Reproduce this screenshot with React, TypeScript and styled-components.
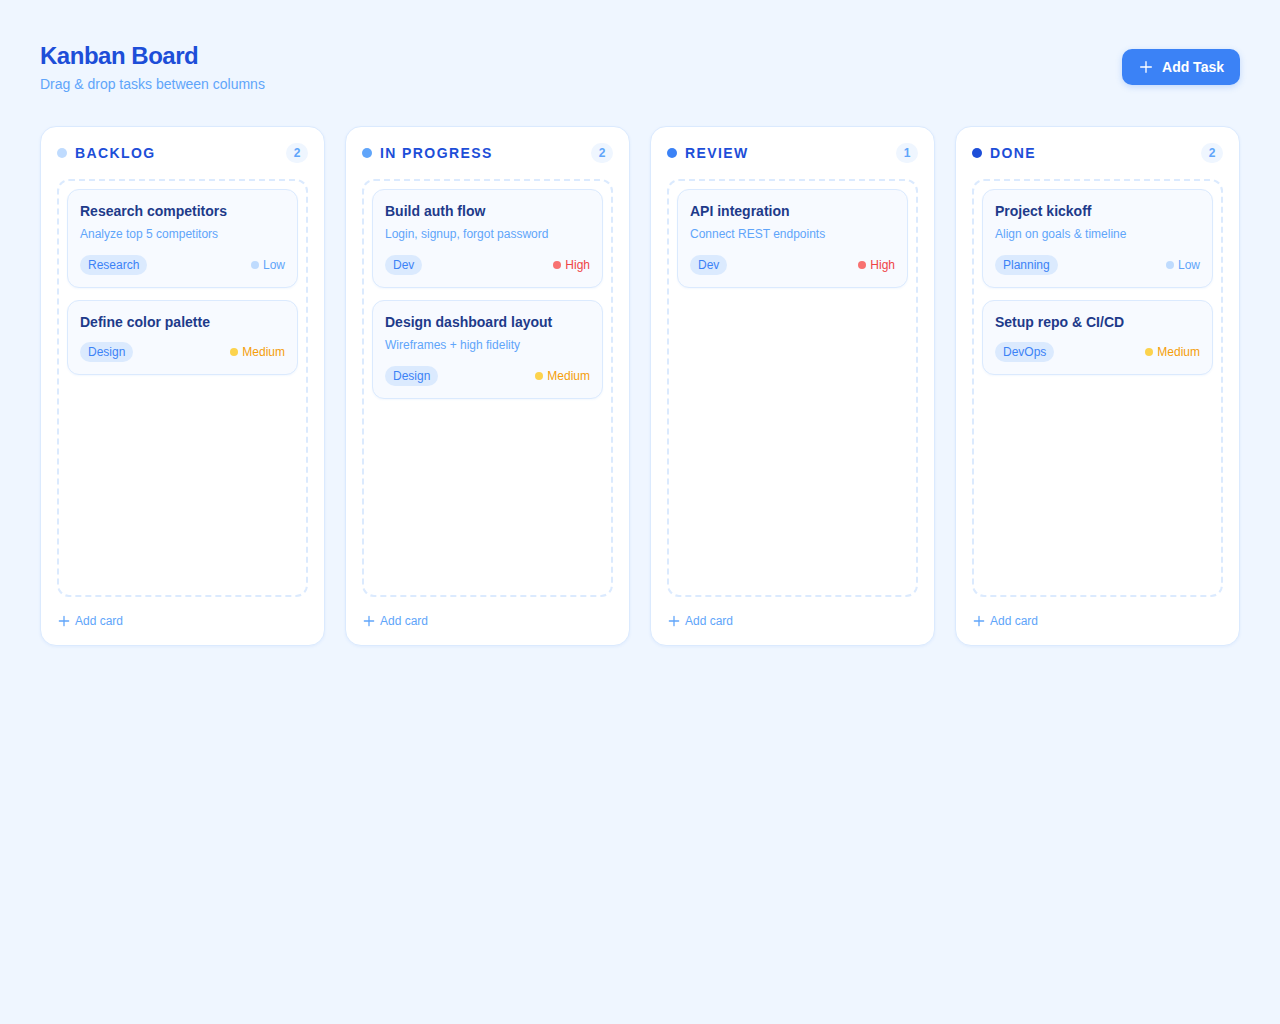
import React from 'react';
import styled, { createGlobalStyle } from 'styled-components';

type Priority = 'Low' | 'Medium' | 'High';

interface ITask {
  id: string;
  title: string;
  description?: string;
  tag: string;
  priority: Priority;
}

interface IColumn {
  id: string;
  title: string;
  dot: string;
  tasks: ITask[];
}

const priorityColors: Record<Priority, { dot: string; text: string }> = {
  Low: { dot: '#bfdbfe', text: '#60a5fa' },
  Medium: { dot: '#fcd34d', text: '#f59e0b' },
  High: { dot: '#f87171', text: '#ef4444' },
};

const columns: IColumn[] = [
  {
    id: 'backlog',
    title: 'Backlog',
    dot: '#bfdbfe',
    tasks: [
      { id: 't1', title: 'Research competitors', description: 'Analyze top 5 competitors', tag: 'Research', priority: 'Low' },
      { id: 't2', title: 'Define color palette', tag: 'Design', priority: 'Medium' },
    ],
  },
  {
    id: 'progress',
    title: 'In Progress',
    dot: '#60a5fa',
    tasks: [
      { id: 't3', title: 'Build auth flow', description: 'Login, signup, forgot password', tag: 'Dev', priority: 'High' },
      { id: 't4', title: 'Design dashboard layout', description: 'Wireframes + high fidelity', tag: 'Design', priority: 'Medium' },
    ],
  },
  {
    id: 'review',
    title: 'Review',
    dot: '#3b82f6',
    tasks: [
      { id: 't5', title: 'API integration', description: 'Connect REST endpoints', tag: 'Dev', priority: 'High' },
    ],
  },
  {
    id: 'done',
    title: 'Done',
    dot: '#1d4ed8',
    tasks: [
      { id: 't6', title: 'Project kickoff', description: 'Align on goals & timeline', tag: 'Planning', priority: 'Low' },
      { id: 't7', title: 'Setup repo & CI/CD', tag: 'DevOps', priority: 'Medium' },
    ],
  },
];

const GlobalStyle = createGlobalStyle`
  * { box-sizing: border-box; }
  html, body {
    margin: 0;
    padding: 0;
    background: #eff6ff;
    font-family: 'Liberation Sans', Arial, sans-serif;
  }
  #root { min-height: 1024px; }
`;

const StyledPage = styled.div`
  padding: 40px;
  min-height: 1024px;
  background: #eff6ff;
`;

const StyledHeader = styled.header`
  display: flex;
  align-items: center;
  justify-content: space-between;
  margin-bottom: 32px;
`;

const StyledTitle = styled.h1`
  margin: 0;
  font-size: 24px;
  line-height: 32px;
  font-weight: 700;
  letter-spacing: -0.02em;
  color: #1d4ed8;
`;

const StyledSubtitle = styled.p`
  margin: 2px 0 0;
  font-size: 14px;
  line-height: 20px;
  color: #60a5fa;
`;

const StyledAddTask = styled.button`
  display: flex;
  align-items: center;
  gap: 8px;
  height: 36px;
  padding: 0 16px;
  border: none;
  border-radius: 10px;
  background: #3b82f6;
  color: #ffffff;
  font-family: inherit;
  font-size: 14px;
  font-weight: 700;
  box-shadow: 0 2px 6px rgba(59, 130, 246, 0.25);
  cursor: pointer;
`;

const StyledBoard = styled.div`
  display: grid;
  grid-template-columns: repeat(4, 1fr);
  gap: 20px;
  align-items: start;
`;

const StyledColumn = styled.section`
  display: flex;
  flex-direction: column;
  padding: 16px;
  background: #ffffff;
  border: 1px solid #dbeafe;
  border-radius: 16px;
  box-shadow: 0 1px 3px rgba(59, 130, 246, 0.08);
`;

const StyledColumnHeader = styled.div`
  display: flex;
  align-items: center;
  height: 20px;
  margin-bottom: 16px;
`;

const StyledDot = styled.span<{ $color: string; $size?: number }>`
  display: inline-block;
  flex-shrink: 0;
  width: ${p => p.$size || 10}px;
  height: ${p => p.$size || 10}px;
  border-radius: 50%;
  background: ${p => p.$color};
`;

const StyledColumnTitle = styled.h2`
  margin: 0 0 0 8px;
  font-size: 14px;
  font-weight: 700;
  letter-spacing: 0.1em;
  text-transform: uppercase;
  color: #1d4ed8;
`;

const StyledCount = styled.span`
  margin-left: auto;
  min-width: 22px;
  height: 20px;
  padding: 0 6px;
  border-radius: 10px;
  background: #eff6ff;
  color: #60a5fa;
  font-size: 12px;
  font-weight: 700;
  line-height: 20px;
  text-align: center;
`;

const StyledDropZone = styled.div`
  display: flex;
  flex-direction: column;
  gap: 12px;
  min-height: 418px;
  padding: 8px;
  border: 2px dashed #dbeafe;
  border-radius: 12px;
`;

const StyledCard = styled.article`
  padding: 12px;
  background: #f7faff;
  border: 1px solid #dbeafe;
  border-radius: 12px;
  box-shadow: 0 1px 2px rgba(59, 130, 246, 0.06);
`;

const StyledCardTitle = styled.h3`
  margin: 0;
  font-size: 14px;
  line-height: 18px;
  font-weight: 700;
  color: #1e3a8a;
`;

const StyledCardDesc = styled.p`
  margin: 6px 0 13px;
  font-size: 12px;
  line-height: 16px;
  color: #60a5fa;
`;

const StyledCardFooter = styled.div`
  display: flex;
  align-items: center;
  justify-content: space-between;
  margin-top: 11px;
`;

const StyledTag = styled.span`
  height: 20px;
  padding: 0 8px;
  border-radius: 10px;
  background: #dbeafe;
  color: #3b82f6;
  font-size: 12px;
  line-height: 20px;
`;

const StyledPriority = styled.span<{ $color: string }>`
  display: flex;
  align-items: center;
  gap: 4px;
  font-size: 12px;
  color: ${p => p.$color};
`;

const StyledAddCard = styled.button`
  display: flex;
  align-items: center;
  gap: 4px;
  margin-top: 16px;
  padding: 0;
  border: none;
  background: none;
  color: #60a5fa;
  font-family: inherit;
  font-size: 12px;
  line-height: 16px;
  cursor: pointer;
`;

const PlusIcon = ({ size, stroke, width }: { size: number; stroke: string; width: number }) => (
  <svg width={size} height={size} viewBox="0 0 24 24" fill="none" stroke={stroke} strokeWidth={width} strokeLinecap="round">
    <path d="M12 4v16M4 12h16" />
  </svg>
);

const TaskCard = ({ task }: { task: ITask }) => {
  const colors = priorityColors[task.priority];
  return (
    <StyledCard>
      <StyledCardTitle>{task.title}</StyledCardTitle>
      {task.description && <StyledCardDesc>{task.description}</StyledCardDesc>}
      <StyledCardFooter>
        <StyledTag>{task.tag}</StyledTag>
        <StyledPriority $color={colors.text}>
          <StyledDot $color={colors.dot} $size={8} />
          {task.priority}
        </StyledPriority>
      </StyledCardFooter>
    </StyledCard>
  );
};

export default function App() {
  return (
    <>
      <GlobalStyle />
      <StyledPage>
        <StyledHeader>
          <div>
            <StyledTitle>Kanban Board</StyledTitle>
            <StyledSubtitle>Drag &amp; drop tasks between columns</StyledSubtitle>
          </div>
          <StyledAddTask>
            <PlusIcon size={16} stroke="#ffffff" width={2} />
            Add Task
          </StyledAddTask>
        </StyledHeader>
        <StyledBoard>
          {columns.map(col => (
            <StyledColumn key={col.id}>
              <StyledColumnHeader>
                <StyledDot $color={col.dot} />
                <StyledColumnTitle>{col.title}</StyledColumnTitle>
                <StyledCount>{col.tasks.length}</StyledCount>
              </StyledColumnHeader>
              <StyledDropZone>
                {col.tasks.map(task => (
                  <TaskCard key={task.id} task={task} />
                ))}
              </StyledDropZone>
              <StyledAddCard>
                <PlusIcon size={14} stroke="#60a5fa" width={2.2} />
                Add card
              </StyledAddCard>
            </StyledColumn>
          ))}
        </StyledBoard>
      </StyledPage>
    </>
  );
}
